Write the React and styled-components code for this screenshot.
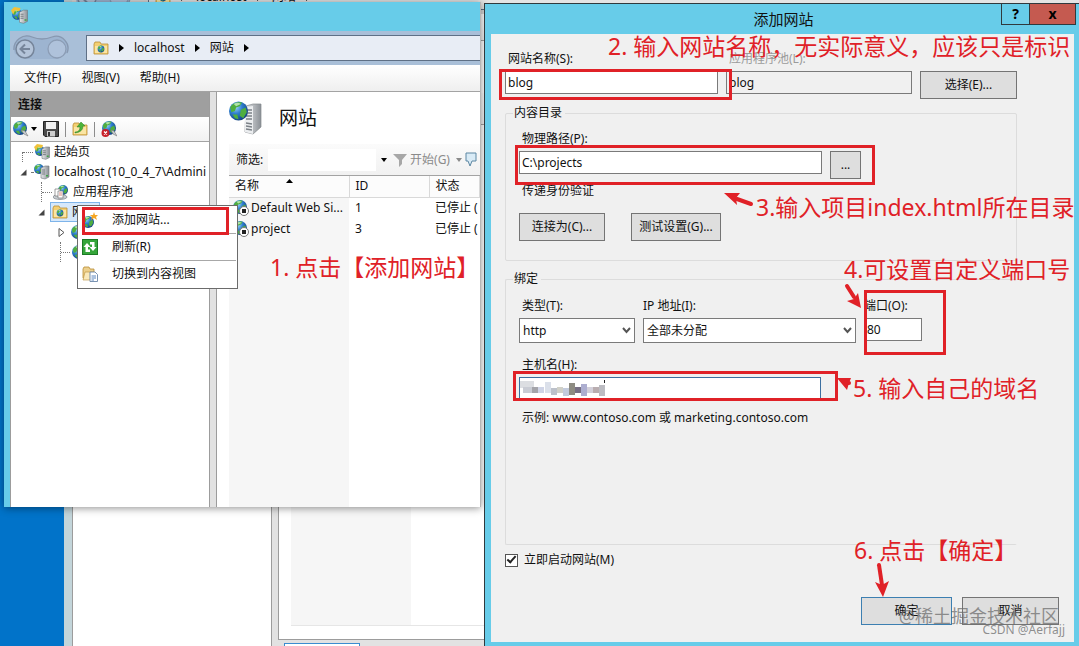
import React from "react";
import styled, { createGlobalStyle, css } from "styled-components";

const RED = "#e02127";
const SKY = "#67cce9";

const GlobalStyle = createGlobalStyle`
  *, *::before, *::after { box-sizing: border-box; }
  html, body, #root { height: 100%; }
  body {
    margin: 0;
    background: #0173c9;
    color: #111;
    font: 12px/16px "Noto Sans", "Noto Sans CJK SC", sans-serif;
  }
  button, input, select { font: inherit; color: inherit; }
`;

/* ---------- desktop ---------- */

const Desktop = styled.main`
  position: relative;
  min-height: 100%;
  overflow: hidden;
  background: #0173c9;
`;

const Win = styled.section`
  position: absolute;
  display: flex;
  flex-direction: column;
  overflow: hidden;
  white-space: nowrap;
  ${(p) =>
    p.$behind
      ? css`
          left: 64px;
          top: -49px;
          bottom: 0;
          right: 0;
          border-left: 8px solid #c3d5da;
        `
      : css`
          left: 4px;
          top: 2px;
          width: 477px;
          height: 505px;
          border-left: 6px solid ${SKY};
          border-right: 1px solid #b5b5b5;
          box-shadow: 0 1px 8px rgba(0, 0, 0, 0.45);
        `}
`;

const TitleBar = styled.header`
  flex: none;
  height: 29px;
  padding: 5px 1px;
  background: ${(p) => (p.$behind ? "#d5d5d5" : SKY)};
`;

const NavBar = styled.nav`
  flex: none;
  display: flex;
  align-items: center;
  gap: 7px;
  height: 34px;
  padding: 0 0 1px 3px;
  background: ${(p) => (p.$behind ? "#d8d8d8" : "#a9bfd8")};
`;

const Address = styled.div`
  flex: 1;
  display: flex;
  align-items: center;
  height: 26px;
  padding-left: 6px;
  gap: 10px;
  border: 1px solid #5f7086;
  border-right: 0;
  background: ${(p) => (p.$behind ? "#e4e4e4" : "#e8edf5")};
`;

const MenuBar = styled.nav`
  flex: none;
  display: flex;
  align-items: center;
  gap: 20px;
  height: 27px;
  padding-left: 14px;
  background: linear-gradient(#fff, #efefef);
  border-bottom: 1px solid #a3a3a3;
`;

const MenuLink = styled.a`
  color: inherit;
  text-decoration: none;
`;

const Main = styled.div`
  flex: 1;
  display: flex;
  min-height: 0;
  background: #e2e2e2;
`;

const Connections = styled.aside`
  flex: none;
  width: 200px;
  margin-right: 6px;
  display: flex;
  flex-direction: column;
  overflow: hidden;
  background: #fff;
  border: solid #9c9c9c;
  border-width: 0 1px;
`;

const PaneTitle = styled.h2`
  margin: 0;
  height: 25px;
  padding-left: 7px;
  font-size: 12px;
  line-height: 25px;
  background: #9f9f9f;
`;

const Tools = styled.div`
  display: flex;
  align-items: center;
  gap: 6px;
  height: 25px;
  padding-left: 2px;
  background: linear-gradient(#fff, #f1f1f1);
  border-bottom: 1px solid #a3a3a3;
`;

const ToolButton = styled.button`
  display: flex;
  align-items: center;
  padding: 0;
  border: 0;
  background: none;
`;

const Divider = styled.span`
  width: 1px;
  height: 15px;
  background: #8c8c8c;
`;

const Tree = styled.ul`
  margin: 0;
  padding: 0;
  list-style: none;
`;

const TreeRow = styled.li`
  display: flex;
  align-items: center;
  height: 20px;
  padding-left: ${(p) => p.$indent}px;
`;

const Toggle = styled.span`
  width: 12px;
  display: flex;
`;

const Dots = styled.span`
  width: ${(p) => p.$w || 10}px;
  margin-right: 1px;
  border-top: 1px dotted #777;
`;

const Stem = styled.span`
  align-self: ${(p) => (p.$down ? "flex-end" : "stretch")};
  height: ${(p) => (p.$down ? "10px" : "auto")};
  border-left: 1px dotted #777;
`;

const Node = styled.span`
  display: flex;
  align-items: center;
  gap: 4px;
  height: 20px;
  padding-right: 3px;
  ${(p) =>
    p.$selected &&
    css`
      width: 50px;
      overflow: hidden;
      background: #d6e8fb;
      border: 1px solid #7eb4ea;
      padding-left: 1px;
    `}
`;

const RightColumn = styled.div`
  flex: 1;
  min-width: 0;
  display: flex;
  flex-direction: column;
`;

const Content = styled.section`
  flex: 1;
  min-height: 0;
  display: flex;
  flex-direction: column;
  padding-left: 12px;
  background: #fff;
  border-left: 1px solid #9c9c9c;
`;

const PageHead = styled.div`
  display: flex;
  align-items: center;
  gap: 17px;
  height: 52px;
`;

const PageTitle = styled.h1`
  margin: 0;
  font-size: 19px;
  line-height: 24px;
  font-weight: 400;
`;

const FilterBar = styled.div`
  display: flex;
  align-items: center;
  height: 32px;
  padding-left: 7px;
  background: linear-gradient(#fbfbfb, #f1f1f1);
  border-bottom: 1px solid #a3a3a3;
  color: #8a8a8a;
  label { color: #111; }
`;

const FilterInput = styled.input`
  width: 108px;
  height: 22px;
  margin: 0 5px;
  border: 0;
  background: #fff;
`;

const Gap = styled.span`
  width: ${(p) => p.$w}px;
`;

const Shade = styled.div`
  flex: 1;
  background: linear-gradient(90deg, #f6f6f6 120px, #fff 120px);
  ${(p) =>
    p.$framed &&
    css`
      margin-bottom: 13px;
      border-bottom: 1px solid #e6e6e6;
    `}
`;

const RowsArea = styled(Shade)`
  overflow: hidden;
`;

const Sites = styled.table`
  width: 100%;
  table-layout: fixed;
  border-collapse: collapse;
  th, td {
    height: 21px;
    padding: 0 0 0 6px;
    text-align: left;
    font-weight: 400;
    overflow: hidden;
  }
  th {
    position: relative;
    background: #fcfcfc;
    border-right: 1px solid #d9d9d9;
    border-bottom: 1px solid #d9d9d9;
  }
  th > svg {
    position: absolute;
    left: 57px;
    top: 3px;
  }
  td:first-child { padding-left: 4px; }
`;

const SiteName = styled.span`
  display: flex;
  align-items: center;
  gap: 2px;
`;

const BackFooter = styled.footer`
  flex: none;
  height: 7px;
  padding: 3px 0 0 6px;
  overflow: hidden;
  background: #e2e2e2;
  border-top: 1px solid #9c9c9c;
  &::before {
    content: "";
    display: block;
    width: 76px;
    height: 8px;
    background: #fff;
    border: 1px solid #3b8cd0;
  }
`;

/* ---------- context menu ---------- */

const ContextMenu = styled.div`
  position: absolute;
  left: 77px;
  top: 205px;
  width: 161px;
  padding: 1px;
  background: #fff;
  border: 1px solid #6b6b6b;
`;

const MenuItem = styled.button`
  display: grid;
  grid-template-columns: 30px 1fr;
  align-items: center;
  width: 100%;
  height: 26px;
  padding: 0 0 0 3px;
  border: 0;
  background: none;
  text-align: left;
`;

const MenuRule = styled.hr`
  margin: 0 0 0 31px;
  border: 0;
  border-top: 1px solid #a8a8a8;
`;

/* ---------- dialog ---------- */

const Dialog = styled.form`
  position: absolute;
  left: 484px;
  right: 0;
  top: 3px;
  bottom: 0;
  display: flex;
  flex-direction: column;
  padding: 0 5px 4px 6px;
  background: ${SKY};
  border: solid #30393d;
  border-width: 1px 0 0 1px;
`;

const DialogTitle = styled.header`
  flex: none;
  display: grid;
  grid-template-columns: 1fr auto 1fr;
  align-items: center;
  height: 30px;
  margin-right: -2px;
  h2 {
    margin: 0;
    font-size: 15px;
    line-height: 24px;
    font-weight: 400;
  }
`;

const Caption = styled.div`
  grid-column: 3;
  align-self: start;
  justify-self: end;
  display: flex;
`;

const CaptionButton = styled.button`
  width: ${(p) => (p.$close ? 46 : 29)}px;
  height: 21px;
  padding: 0;
  border: solid #30393d;
  border-width: 0 1px 1px ${(p) => (p.$close ? 0 : 1)}px;
  background: ${(p) => (p.$close ? "#c55a50" : SKY)};
  color: #000;
  font-size: 14px;
  line-height: 16px;
  font-weight: 700;
`;

const DialogBody = styled.div`
  flex: 1;
  display: flex;
  flex-direction: column;
  padding: 17px 15px 17px 14px;
  background: #f0f0f0;
`;

const Form = styled.div`
  flex: 1;
  display: flex;
  flex-direction: column;
  margin-right: 42px;
`;

const TopRow = styled.div`
  display: grid;
  grid-template-columns: 1fr 186px 97px;
  gap: 4px 8px;
  margin-bottom: 6px;
  align-items: start;
`;

const Label = styled.label`
  display: block;
  padding-left: ${(p) => (p.$flush ? 0 : 3)}px;
  color: ${(p) => (p.$muted ? "#9b9b9b" : "inherit")};
`;

const Note = styled.p`
  margin: 0;
  padding-left: 3px;
`;

const TextInput = styled.input`
  display: block;
  width: 100%;
  height: 23px;
  padding: 0 2px;
  border: 1px solid ${(p) => (p.$focused ? "#3c6fa0" : "#7a7a7a")};
  border-radius: 0;
  outline: 0;
  background: ${(p) => (p.readOnly ? "#f0f0f0" : "#fff")};
`;

const Button = styled.button`
  height: 28px;
  width: ${(p) => (p.$w ? p.$w + "px" : "100%")};
  padding: 0;
  background: #dedede;
  border: 1px solid ${(p) => (p.$primary ? "#3c7fb1" : "#747474")};
`;

const Group = styled.fieldset`
  position: relative;
  display: flex;
  flex-direction: column;
  flex: ${(p) => (p.$grow ? 1 : "none")};
  min-width: 0;
  margin: 0 0 ${(p) => (p.$grow ? 7 : 10)}px;
  padding: 10px 13px 15px;
  border: 1px solid #dcdcdc;
  border-radius: 2px;
  ${(p) =>
    p.$grow &&
    css`
      border-right-color: transparent;
    `}
`;

const Legend = styled.legend`
  margin-left: -6px;
  padding: 0 3px 0 1px;
`;

const Row = styled.div`
  display: flex;
  align-items: flex-start;
  gap: ${(p) => p.$gap || 8}px;
  margin: ${(p) => p.$top || 4}px 0 ${(p) => p.$bottom || 4}px;
`;

const Sized = styled.div`
  position: relative;
  flex: 0 1 ${(p) => p.$w}px;
  > label { margin-bottom: 4px; }
`;

const Field = styled.div`
  position: relative;
  > svg {
    position: absolute;
    right: 4px;
    top: 9px;
    pointer-events: none;
  }
`;

const Select = styled.select`
  display: block;
  appearance: none;
  width: 100%;
  height: 25px;
  padding: 0 3px;
  border: 1px solid #7a7a7a;
  border-radius: 0;
  background: #fff;
`;

const Masked = styled.span`
  position: absolute;
  left: 1px;
  top: 3px;
  display: flex;
`;

const CheckRow = styled.label`
  display: flex;
  align-items: center;
  gap: 6px;
`;

const Check = styled.input`
  appearance: none;
  width: 13px;
  height: 13px;
  margin: 0;
  border: 1px solid #555;
  background: #fff;
  &:checked::after {
    content: "";
    display: block;
    width: 5px;
    height: 9px;
    margin: -1px 0 0 3px;
    border: solid #222;
    border-width: 0 2px 2px 0;
    transform: rotate(42deg);
  }
`;

const Actions = styled.footer`
  display: flex;
  justify-content: flex-end;
  gap: 10px;
  margin-top: 29px;
`;

/* ---------- tutorial marks ---------- */

const Mark = styled.div`
  position: absolute;
  pointer-events: none;
  left: ${(p) => p.$x}px;
  top: ${(p) => p.$y}px;
`;

const Frame = styled(Mark)`
  width: ${(p) => p.$w}px;
  height: ${(p) => p.$h}px;
  border: 3px solid ${RED};
`;

const Callout = styled(Mark)`
  color: ${RED};
  font-size: 23px;
  line-height: 30px;
  white-space: nowrap;
`;

const Watermark = styled(Mark)`
  left: auto;
  top: auto;
  right: ${(p) => p.$right}px;
  bottom: ${(p) => p.$bottom}px;
  font-size: ${(p) => p.$size}px;
  line-height: 20px;
  color: rgba(110, 110, 110, 0.75);
  white-space: nowrap;
`;

function Arrow({ x, y, w, h, shaft, head }) {
  return (
    <Mark $x={x} $y={y} as="svg" width={w} height={h} viewBox={`0 0 ${w} ${h}`}>
      <path d={shaft} stroke={RED} strokeWidth="4" strokeLinecap="round" fill="none" />
      <path d={head} fill={RED} />
    </Mark>
  );
}

/* ---------- icons ---------- */

const HiddenSvg = styled.svg`
  position: absolute;
`;

const IconSvg = styled.svg`
  flex: none;
`;

function Defs() {
  return (
    <HiddenSvg width="0" height="0" aria-hidden="true">
      <defs>
        <radialGradient id="globe" cx="35%" cy="30%" r="75%">
          <stop offset="0" stopColor="#9fd6f7" />
          <stop offset="0.45" stopColor="#2f7fd0" />
          <stop offset="1" stopColor="#123f7e" />
        </radialGradient>
        <linearGradient id="steel">
          <stop offset="0" stopColor="#e6e8ea" />
          <stop offset="1" stopColor="#8b9096" />
        </linearGradient>
      </defs>
    </HiddenSvg>
  );
}

const GlobeArt = ({ cx, cy, r }) => (
  <g transform={`translate(${cx} ${cy}) scale(${r / 8})`}>
    <circle r="8" fill="url(#globe)" />
    <path d="M-7 -3C-5 -7 0 -8 3 -7L1 -4L-2 -3L-3 0L-6 1ZM2 -1L6 -3L7 1L4 6L1 4Z M-5 3L-1 3L0 7L-3 6Z" fill="#4fae3f" />
    <path d="M-4 -6Q-1 -8 2 -6L-2 -4Z" fill="#c9efc4" opacity="0.8" />
  </g>
);

const ServerArt = ({ x, y, s = 1 }) => (
  <g transform={`translate(${x} ${y}) scale(${s})`}>
    <path d="M0 2L4 0H8V11L4 13L0 12Z" fill="url(#steel)" stroke="#6f757b" strokeWidth="0.6" />
    <path d="M1 4H4M1 6H4M1 8H4" stroke="#62686e" strokeWidth="0.8" />
    <rect x="5" y="9" width="2" height="1.5" fill="#3fa546" />
  </g>
);

const FolderArt = () => (
  <>
    <path d="M1 4L2 2H7L8 4H15V14H1Z" fill="#f3cf72" stroke="#b98e35" strokeWidth="0.8" />
    <path d="M2 6H14V13H2Z" fill="#fae5a4" />
  </>
);

function Icon({ name, size = 16 }) {
  const art = {
    iis: (
      <>
        <GlobeArt cx={6} cy={7} r={5} />
        <path d="M0 3L3 0L9 1L8 4L4 3L2 7Z" fill="#f0c23a" />
        <ServerArt x={8} y={3} s={0.95} />
      </>
    ),
    server: (
      <>
        <GlobeArt cx={5} cy={5} r={5} />
        <ServerArt x={7} y={2} />
      </>
    ),
    pool: (
      <>
        <GlobeArt cx={10} cy={6} r={5} />
        <ellipse cx="7" cy="13" rx="7" ry="2.5" fill="#c8cdd2" stroke="#6f757b" strokeWidth="0.6" />
        <path d="M2 5H7V12H2Z" fill="#fff" stroke="#777" strokeWidth="0.7" />
        <path d="M5 7H10V14H5Z" fill="#fff" stroke="#777" strokeWidth="0.7" />
        <path d="M6 9H9M6 11H9" stroke="#d06b5d" strokeWidth="0.8" />
      </>
    ),
    folder: (
      <>
        <FolderArt />
        <GlobeArt cx={8} cy={9} r={3.4} />
      </>
    ),
    up: (
      <>
        <FolderArt />
        <path d="M3 11Q8 11 8 6H5L9 1L13 5H11Q11 11 3 12Z" fill="#4cb43a" stroke="#2b7d24" strokeWidth="0.5" />
      </>
    ),
    connect: (
      <>
        <GlobeArt cx={7} cy={7} r={7} />
        <path d="M8 9L12 10L15 15L11 13Z" fill="#c9ced3" stroke="#777" strokeWidth="0.6" />
      </>
    ),
    disconnect: (
      <>
        <GlobeArt cx={8} cy={7} r={7} />
        <path d="M10 9L13 10L16 15L12 13Z" fill="#c9ced3" stroke="#777" strokeWidth="0.6" />
        <circle cx="4.5" cy="12" r="4" fill="#c8202a" />
        <path d="M3 10.5L6 13.5M6 10.5L3 13.5" stroke="#fff" strokeWidth="1.3" />
      </>
    ),
    save: (
      <>
        <path d="M0.5 0.5H15.5V15.5H2L0.5 14Z" fill="#4c4c4c" stroke="#222" />
        <rect x="3" y="1" width="10" height="7" fill="#f2f2f2" />
        <rect x="4" y="10" width="8" height="5.5" fill="#cfcfcf" />
        <rect x="5" y="11" width="2" height="4" fill="#333" />
      </>
    ),
    add: (
      <>
        <GlobeArt cx={6} cy={10} r={6} />
        <path d="M12 0L13 3L16 3L14 5L15 8L12 6L9 8L10 5L8 3L11 3Z" fill="#f5a623" />
      </>
    ),
    site: <GlobeArt cx={8} cy={8} r={7} />,
    stopped: (
      <>
        <GlobeArt cx={7} cy={7} r={7} />
        <circle cx="11" cy="11" r="4.5" fill="#fff" stroke="#777" />
        <rect x="9" y="9" width="4" height="4" fill="#222" />
      </>
    ),
    refresh: (
      <>
        <rect x="0.5" y="0.5" width="15" height="15" fill="#35a53a" stroke="#1c7a25" />
        <path d="M8 13H3.5V8H1.5L5 4L8.500 8H6V10.500H8Z" fill="#fff" />
        <path d="M8 3H12.500V8H14.500L11 12L7.500 8H10V5.500H8Z" fill="#fff" />
      </>
    ),
    view: (
      <>
        <path d="M1 3L2 1H7L8 3H12V12H1Z" fill="#eccf8c" stroke="#b98e35" strokeWidth="0.8" />
        <path d="M3 6H12V14H1Z" fill="#fae9bb" stroke="#b98e35" strokeWidth="0.6" />
        <path d="M8 6H13L15.5 8.5V15.5H8Z" fill="#fff" stroke="#6a86a8" strokeWidth="0.9" />
        <path d="M9.5 10H14M9.5 12H14M9.5 14H12" stroke="#4779b8" strokeWidth="0.9" />
      </>
    ),
    filter: <path d="M1 2H15L10 8V12L7 15V8Z" fill="#a7a7a7" />,
    all: <path d="M2 1H12V9H8L6 14L4 9H2Z" fill="#d9ebf6" stroke="#5d87a3" />,
  }[name];
  return (
    <IconSvg width={size} height={size} viewBox="0 0 16 16" aria-hidden="true">
      {art}
    </IconSvg>
  );
}

const Crumb = () => (
  <IconSvg width="5" height="8" viewBox="0 0 5 8"><path d="M0 0L5 4L0 8Z" fill="#000" /></IconSvg>
);
const Caret = ({ color = "#000" }) => (
  <IconSvg width="6" height="4" viewBox="0 0 6 4"><path d="M0 0H6L3 4Z" fill={color} /></IconSvg>
);
const Open = () => (
  <IconSvg width="7" height="7" viewBox="0 0 7 7"><path d="M6.5 0.5V6.5H0.5Z" fill="#444" /></IconSvg>
);
const Closed = () => (
  <IconSvg width="7" height="9" viewBox="0 0 7 9"><path d="M1 0.5L6 4.5L1 8.5Z" fill="#fff" stroke="#555" /></IconSvg>
);
const Chevron = () => (
  <svg width="9" height="7" viewBox="0 0 9 7">
    <path d="M1 1L4.5 5L8 1" fill="none" stroke="#555" strokeWidth="2" />
  </svg>
);

const NavButtons = () => (
  <IconSvg width="66" height="30" viewBox="0 0 66 30" aria-hidden="true">
    <path d="M2 21A13 13 0 0 1 19 4Q29 8 39 4A12 12 0 0 1 54 20L45 26L13 26Z" fill="#9db4d0" />
    <path d="M1 17A13 13 0 0 1 19 4Q29 8 39 4A12 12 0 0 1 54 20" fill="none" stroke="#8798b0" strokeWidth="1.3" />
    <circle cx="12" cy="16" r="9" fill="#b4c4d9" stroke="#76859a" strokeWidth="1.5" />
    <circle cx="44" cy="16" r="9" fill="#afc2db" stroke="#8c9db5" strokeWidth="1.3" />
    <path d="M17 16H8M12 11.5L7.500 16L12 20.5" fill="none" stroke="#76859a" strokeWidth="2" />
  </IconSvg>
);

const LargeServer = () => (
  <IconSvg width="33" height="34" viewBox="0 0 33 34" aria-hidden="true">
    <path d="M17 5L24 3H32V26L24 33L16 31Z" fill="url(#steel)" stroke="#85898e" strokeWidth="0.7" />
    <path d="M24 5V33L16 31V6Z" fill="#eceef0" />
    <path d="M17 9H23M17 12H23M17 15H23M17 18H23M17 22L23 23M17 25L23 26M17 28L23 29" stroke="#7b8187" strokeWidth="1.3" />
    <GlobeArt cx={9.5} cy={10} r={9.5} />
  </IconSvg>
);

const mosaic = [
  [0, 1, 14, 7, "#dcdee2"], [3, 7, 9, 6, "#c9ccd4"], [12, 7, 6, 6, "#a4a4aa"], [18, 7, 6, 6, "#cfd4e6"],
  [25, 2, 6, 11, "#dbe0ea"], [31, 8, 6, 7, "#bcc1ca"], [37, 7, 6, 6, "#d0d0c8"], [43, 8, 6, 8, "#c3cbdc"],
  [49, 3, 6, 12, "#8e8c82"], [55, 7, 6, 6, "#777084"], [61, 4, 6, 12, "#adaed0"], [67, 7, 6, 6, "#d3d0da"],
  [73, 7, 6, 6, "#b9adb0"], [79, 5, 6, 11, "#bcbcc2"], [84, 0, 1, 3, "#222"],
];

/* ---------- windows ---------- */

function ManagerWindow({ behind }) {
  return (
    <Win $behind={behind}>
      <TitleBar $behind={behind}><Icon name="iis" size={17} /></TitleBar>
      <NavBar $behind={behind}>
        <NavButtons />
        <Address $behind={behind}>
          <Icon name="folder" /><Crumb /><span>localhost</span><Crumb /><span>网站</span><Crumb />
        </Address>
      </NavBar>
      <MenuBar>
        {!behind && ["文件(F)", "视图(V)", "帮助(H)"].map((m) => <MenuLink href="#" key={m}>{m}</MenuLink>)}
      </MenuBar>
      <Main>
        <Connections>
          {!behind && (
            <>
              <PaneTitle>连接</PaneTitle>
              <Tools>
                <ToolButton type="button" aria-label="连接"><Icon name="connect" /><Gap $w={2} /><Caret /></ToolButton>
                <ToolButton type="button" aria-label="保存"><Icon name="save" /></ToolButton>
                <Divider />
                <ToolButton type="button" aria-label="上移"><Icon name="up" /></ToolButton>
                <Divider />
                <ToolButton type="button" aria-label="断开"><Icon name="disconnect" /></ToolButton>
              </Tools>
              <Tree>
                <TreeRow $indent={11}><Stem $down /><Dots /><Node><Icon name="iis" />起始页</Node></TreeRow>
                <TreeRow $indent={9}><Toggle><Open /></Toggle><Dots $w={2} /><Node><Icon name="server" />localhost (10_0_4_7\Admini</Node></TreeRow>
                <TreeRow $indent={30}><Stem /><Dots /><Node><Icon name="pool" />应用程序池</Node></TreeRow>
                <TreeRow $indent={27}><Toggle><Open /></Toggle><Node $selected><Icon name="folder" />网站</Node></TreeRow>
                <TreeRow $indent={47}><Toggle><Closed /></Toggle><Node><Icon name="site" /></Node></TreeRow>
                <TreeRow $indent={49}><Stem /><Dots $w={9} /><Node><Icon name="site" /></Node></TreeRow>
              </Tree>
            </>
          )}
        </Connections>
        <RightColumn>
          <Content>
            <PageHead>{!behind && <><LargeServer /><PageTitle>网站</PageTitle></>}</PageHead>
            <FilterBar>
              {!behind && (
                <>
                  <label htmlFor="filter">筛选:</label>
                  <FilterInput id="filter" />
                  <Caret /><Gap $w={8} /><Icon name="filter" /><Gap $w={3} />开始(G)<Gap $w={9} />
                  <Caret color="#8a8a8a" /><Gap $w={4} /><Icon name="all" />
                </>
              )}
            </FilterBar>
            {behind ? <Shade $framed /> : <SiteList />}
          </Content>
          {behind && <BackFooter />}
        </RightColumn>
      </Main>
    </Win>
  );
}

function SiteList() {
  return (
    <RowsArea>
      <Sites>
        <colgroup><col width="120" /><col width="80" /><col /></colgroup>
        <thead>
          <tr>
            <th>名称<svg width="7" height="4" viewBox="0 0 7 4"><path d="M0 4H7L3.5 0Z" fill="#000" /></svg></th>
            <th>ID</th>
            <th>状态</th>
          </tr>
        </thead>
        <tbody>
          {[["Default Web Si...", "1"], ["project", "3"]].map(([name, id]) => (
            <tr key={id}>
              <td><SiteName><Icon name="stopped" />{name}</SiteName></td>
              <td>{id}</td>
              <td>已停止 (</td>
            </tr>
          ))}
        </tbody>
      </Sites>
    </RowsArea>
  );
}

function AddSiteDialog() {
  return (
    <Dialog onSubmit={(e) => e.preventDefault()}>
      <DialogTitle>
        <span />
        <h2>添加网站</h2>
        <Caption>
          <CaptionButton type="button" aria-label="帮助">?</CaptionButton>
          <CaptionButton type="button" $close aria-label="关闭">x</CaptionButton>
        </Caption>
      </DialogTitle>
      <DialogBody>
        <Form>
          <TopRow>
            <Label htmlFor="name">网站名称(S):</Label>
            <Label htmlFor="pool" $muted>应用程序池(L):</Label>
            <span />
            <TextInput id="name" defaultValue="blog" />
            <TextInput id="pool" value="blog" readOnly />
            <Button type="button">选择(E)...</Button>
          </TopRow>
          <Group>
            <Legend>内容目录</Legend>
            <Label htmlFor="path">物理路径(P):</Label>
            <Row>
              <Sized $w={303}><TextInput id="path" defaultValue="C:\projects" /></Sized>
              <Button type="button" $w={31}>...</Button>
            </Row>
            <Note>传递身份验证</Note>
            <Row $gap={26} $top={14}>
              <Button type="button" $w={86}>连接为(C)...</Button>
              <Button type="button" $w={90}>测试设置(G)...</Button>
            </Row>
          </Group>
          <Group $grow>
            <Legend>绑定</Legend>
            <Row $top={1}>
              <Sized $w={116}>
                <Label htmlFor="type">类型(T):</Label>
                <Field><Select id="type"><option>http</option></Select><Chevron /></Field>
              </Sized>
              <Sized $w={213}>
                <Label htmlFor="ip" $flush>IP 地址(I):</Label>
                <Field><Select id="ip"><option>全部未分配</option></Select><Chevron /></Field>
              </Sized>
              <Sized $w={58}>
                <Label htmlFor="port" $flush>端口(O):</Label>
                <TextInput id="port" defaultValue="80" />
              </Sized>
            </Row>
            <Row $top={10} $bottom={10}>
              <Sized $w={302}>
                <Label htmlFor="host">主机名(H):</Label>
                <Field>
                  <TextInput id="host" $focused />
                  <Masked>
                    <svg width="90" height="17" viewBox="0 0 90 17">
                      {mosaic.map(([x, y, w, h, c]) => <rect key={x + "-" + y} x={x} y={y} width={w} height={h} fill={c} />)}
                    </svg>
                  </Masked>
                </Field>
              </Sized>
            </Row>
            <Note>示例: www.contoso.com 或 marketing.contoso.com</Note>
          </Group>
          <CheckRow><Check type="checkbox" defaultChecked />立即启动网站(M)</CheckRow>
        </Form>
        <Actions>
          <Button $w={91} $primary>确定</Button>
          <Button type="button" $w={97}>取消</Button>
        </Actions>
      </DialogBody>
    </Dialog>
  );
}

export default function App() {
  return (
    <>
      <GlobalStyle />
      <Defs />
      <Desktop>
        <ManagerWindow behind />
        <ManagerWindow />
        <ContextMenu>
          <MenuItem><Icon name="add" /><span>添加网站...</span></MenuItem>
          <MenuRule />
          <MenuItem><Icon name="refresh" /><span>刷新(R)</span></MenuItem>
          <MenuRule />
          <MenuItem><Icon name="view" /><span>切换到内容视图</span></MenuItem>
        </ContextMenu>
        <AddSiteDialog />

        <Frame $x={82} $y={207} $w={147} $h={28} />
        <Frame $x={499} $y={69} $w={233} $h={31} />
        <Frame $x={515} $y={145} $w={360} $h={40} />
        <Frame $x={864} $y={290} $w={82} $h={65} />
        <Frame $x={513} $y={371} $w={325} $h={30} />

        <Callout $x={270} $y={252}>1. 点击【添加网站】</Callout>
        <Callout $x={608} $y={31}>2. 输入网站名称，无实际意义，应该只是标识</Callout>
        <Callout $x={756} $y={192}>3.输入项目index.html所在目录</Callout>
        <Callout $x={844} $y={254}>4.可设置自定义端口号</Callout>
        <Callout $x={853} $y={373}>5. 输入自己的域名</Callout>
        <Callout $x={854} $y={535}>6. 点击【确定】</Callout>

        <Arrow x={723} y={190} w={32} h={18} shaft="M28 14L14 9" head="M1 3L17 3L13 8L14 15Z" />
        <Arrow x={843} y={282} w={20} h={28} shaft="M4 4L11 15" head="M18 26L4 19L11 17L15 11Z" />
        <Arrow x={836} y={376} w={18} h={16} shaft="M13 7L12 7" head="M1 2L15 2L13 7L11 14Z" />
        <Arrow x={873} y={561} w={18} h={38} shaft="M6 4L9 24" head="M10 36L2 21L9 24L16 20Z" />

        <Watermark $right={20} $bottom={20} $size={18}>@稀土掘金技术社区</Watermark>
        <Watermark $right={14} $bottom={6} $size={12}>CSDN @Aerfajj</Watermark>
      </Desktop>
    </>
  );
}
